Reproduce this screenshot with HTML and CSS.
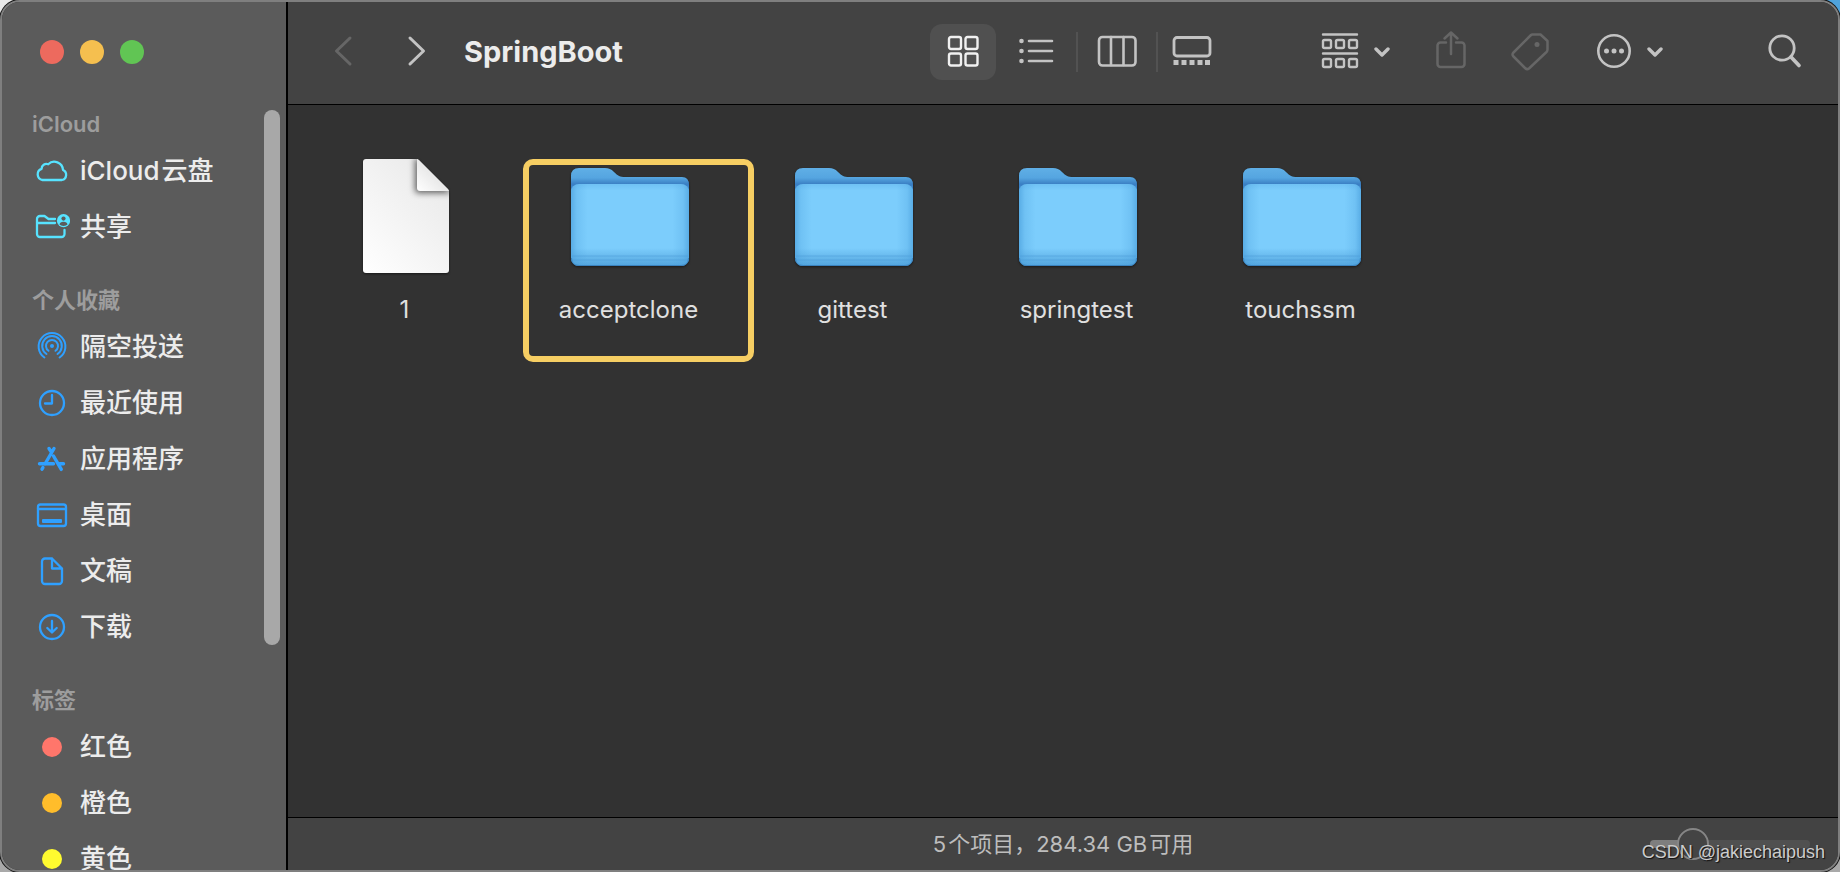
FILE: index.html
```html
<!DOCTYPE html>
<html lang="zh-CN">
<head>
<meta charset="utf-8">
<title>SpringBoot</title>
<link rel="stylesheet" href="styles.css">
</head>
<body>
<svg class="defs" aria-hidden="true">
  <defs>
    <linearGradient id="folder-back" x1="0" y1="0" x2="0" y2="1">
      <stop offset="0" stop-color="#60afe6"/>
      <stop offset="0.38" stop-color="#55a5e0"/>
      <stop offset="0.62" stop-color="#3a7fc4"/>
      <stop offset="1" stop-color="#4490d2"/>
    </linearGradient>
    <linearGradient id="folder-front" x1="0" y1="0" x2="0" y2="1">
      <stop offset="0" stop-color="#6fc1f4"/>
      <stop offset="0.08" stop-color="#7ccdfc"/>
      <stop offset="0.78" stop-color="#7ccdfc"/>
      <stop offset="0.87" stop-color="#6bbcef"/>
      <stop offset="1" stop-color="#52a5de"/>
    </linearGradient>
    <linearGradient id="folder-sides" x1="0" y1="0" x2="1" y2="0">
      <stop offset="0" stop-color="#4a9fdc" stop-opacity="0.7"/>
      <stop offset="0.05" stop-color="#4a9fdc" stop-opacity="0.25"/>
      <stop offset="0.14" stop-color="#4a9fdc" stop-opacity="0"/>
      <stop offset="0.86" stop-color="#4a9fdc" stop-opacity="0"/>
      <stop offset="0.95" stop-color="#4a9fdc" stop-opacity="0.25"/>
      <stop offset="1" stop-color="#4a9fdc" stop-opacity="0.7"/>
    </linearGradient>
    <linearGradient id="paper" x1="0" y1="1" x2="0.8" y2="0">
      <stop offset="0" stop-color="#ffffff"/>
      <stop offset="1" stop-color="#e9e9e9"/>
    </linearGradient>
    <linearGradient id="paper-fold" x1="0" y1="1" x2="0.6" y2="0.4">
      <stop offset="0" stop-color="#ffffff"/>
      <stop offset="1" stop-color="#e4e4e4"/>
    </linearGradient>
    <clipPath id="paper-clip">
      <path d="M24 7H74Q76 7 77 8L106 37Q107 38 107 40V118Q107 121 104 121H24Q21 121 21 118V10Q21 7 24 7Z"/>
    </clipPath>
    <filter id="soft" x="-50%" y="-50%" width="200%" height="200%"><feGaussianBlur stdDeviation="3"/></filter>
    <symbol id="folder" viewBox="0 0 128 128">
      <path d="M5 42V24Q5 16 13 16H39C43 16 45 17 48 20C52 24 54 25 59 25H116Q123 25 123 33V42Z" fill="url(#folder-back)"/>
      <path d="M5 42V100H123V42Z" fill="#4a98d8"/>
      <rect x="5" y="32" width="118" height="82" rx="8" fill="url(#folder-front)"/>
      <rect x="5" y="32" width="118" height="82" rx="8" fill="url(#folder-sides)"/>
      <path d="M6 104H122M6 108H122" stroke="#4c9dd8" stroke-opacity="0.6"/>
      <path d="M5.500 106Q5.500 113.500 13 113.500H115Q122.500 113.500 122.500 106" fill="none" stroke="#3b83bf"/>
    </symbol>
    <symbol id="chevron-down" viewBox="0 0 16 40">
      <path d="M2 17L8 23L14 17" fill="none" stroke="currentColor" stroke-width="3.400" stroke-linecap="round" stroke-linejoin="round"/>
    </symbol>
  </defs>
</svg>

<div class="window">
  <aside class="sidebar">
    <div class="traffic">
      <button class="light light-close" aria-label="关闭"></button>
      <button class="light light-minimize" aria-label="最小化"></button>
      <button class="light light-zoom" aria-label="缩放"></button>
    </div>
    <nav class="places">
      <section class="group">
        <h2 class="group-title">iCloud</h2>
        <a class="place cyan" href="#">
          <svg class="place-icon" viewBox="0 0 36 36" stroke-width="2.300"><path d="M8.500 27A5.800 5.800 0 0 1 7.600 15.800A4.800 4.800 0 0 1 14.200 11.300A8.700 8.700 0 0 1 29 17A5.300 5.300 0 0 1 28 27Z"/></svg>
          <span><span class="latin">iCloud</span>云盘</span>
        </a>
        <a class="place cyan" href="#">
          <svg class="place-icon" viewBox="0 0 36 36" stroke-width="2.300"><path d="M21 10H14.500L10.500 7H6A3 3 0 0 0 3 10V25A3 3 0 0 0 6 28H27.500A3 3 0 0 0 30.500 25V21M3 14H21"/><circle class="solid" cx="29.500" cy="11.700" r="6.600"/><circle class="cutout" cx="29.500" cy="9.600" r="2.100"/><path class="cutout" d="M25.500 15.600Q26 12.800 29.500 12.800T33.500 15.600Q32 17 29.500 17T25.500 15.600Z"/></svg>
          <span>共享</span>
        </a>
      </section>
      <section class="group">
        <h2 class="group-title">个人收藏</h2>
        <a class="place" href="#">
          <svg class="place-icon" viewBox="0 0 36 36" stroke-width="2"><path d="M10.400 28.500A13.400 13.400 0 1 1 25.600 28.500M12.500 25A9.800 9.800 0 1 1 23.500 25M14.500 21.800A6 6 0 1 1 21.500 21.800"/><circle class="solid" cx="18" cy="17" r="2"/></svg>
          <span>隔空投送</span>
        </a>
        <a class="place" href="#">
          <svg class="place-icon" viewBox="0 0 36 36" stroke-width="2.300"><circle cx="18" cy="18" r="12"/><path d="M18 10V18.500H11"/></svg>
          <span>最近使用</span>
        </a>
        <a class="place" href="#">
          <svg class="place-icon" viewBox="0 0 36 36" stroke-width="3.400"><path d="M20 7.500L11 23M8.900 26.600L8 28.200M5.500 22.700H19.500M25.500 22.700H29.500M15 7.500L17 10.500M19.500 15L27.300 28.400"/></svg>
          <span>应用程序</span>
        </a>
        <a class="place" href="#">
          <svg class="place-icon" viewBox="0 0 36 36" stroke-width="2.300"><rect x="4" y="7.500" width="28" height="21.500" rx="2.500"/><path d="M4 12H32"/><rect class="solid" x="8" y="22" width="20" height="4" rx="1"/></svg>
          <span>桌面</span>
        </a>
        <a class="place" href="#">
          <svg class="place-icon" viewBox="0 0 36 36" stroke-width="2.300"><path d="M11 5.500H18L28 15.500V28A3 3 0 0 1 25 31H11A3 3 0 0 1 8 28V8.500A3 3 0 0 1 11 5.500ZM18 5.500V15.500H28"/></svg>
          <span>文稿</span>
        </a>
        <a class="place" href="#">
          <svg class="place-icon" viewBox="0 0 36 36" stroke-width="2.300"><circle cx="18" cy="18" r="12"/><path d="M18 12V23.500M13.300 19L18 23.500L22.700 19"/></svg>
          <span>下载</span>
        </a>
      </section>
      <section class="group">
        <h2 class="group-title">标签</h2>
        <a class="place" href="#"><span class="tag tag-red"></span><span>红色</span></a>
        <a class="place" href="#"><span class="tag tag-orange"></span><span>橙色</span></a>
        <a class="place" href="#"><span class="tag tag-yellow"></span><span>黄色</span></a>
      </section>
    </nav>
    <div class="scroll-thumb"></div>
  </aside>

  <main class="main">
    <header class="toolbar">
      <div class="history">
        <button class="tool dim" aria-label="后退"><svg width="16" height="40" viewBox="0 0 16 40" stroke-width="3"><path d="M15 6L1.500 19L15 32"/></svg></button>
        <button class="tool" aria-label="前进"><svg width="16" height="40" viewBox="0 0 16 40" stroke-width="3"><path d="M1 6L14.500 19L1 32"/></svg></button>
      </div>
      <h1 class="title">SpringBoot</h1>
      <div class="views">
        <button class="tool view view-active" aria-label="图标"><svg width="32" height="40" viewBox="0 0 32 40" stroke-width="2.400"><rect x="2" y="5" width="12" height="12" rx="2"/><rect x="18.500" y="5" width="12" height="12" rx="2"/><rect x="2" y="21.500" width="12" height="12" rx="2"/><rect x="18.500" y="21.500" width="12" height="12" rx="2"/></svg></button>
        <button class="tool view view-list" aria-label="列表"><svg width="34" height="40" viewBox="0 0 34 40" stroke-width="2.600"><path d="M10 9H33M10 19H33M10 29H33"/><g class="solid"><circle cx="2.500" cy="9" r="2.300"/><circle cx="2.500" cy="19" r="2.300"/><circle cx="2.500" cy="29" r="2.300"/></g></svg></button>
        <button class="tool view view-columns" aria-label="分栏"><svg width="40" height="40" viewBox="0 0 40 40" stroke-width="2.600"><rect x="2" y="5" width="36.500" height="28.500" rx="3.500"/><path d="M14 5V33M26.500 5V33"/></svg></button>
        <button class="tool view view-gallery" aria-label="画廊"><svg width="40" height="40" viewBox="0 0 40 40" stroke-width="2.800"><rect x="2" y="5.500" width="36" height="18.500" rx="3"/><g class="solid"><rect x="1.500" y="28" width="5" height="5"/><rect x="9.500" y="28" width="5" height="5"/><rect x="17.500" y="28" width="5" height="5"/><rect x="25.500" y="28" width="5" height="5"/><rect x="33" y="28" width="5" height="5"/></g></svg></button>
      </div>
      <button class="tool" aria-label="分组"><svg width="36" height="40" viewBox="0 0 36 40" stroke-width="2.400"><path d="M1 2.500H35M1 21.500H35"/><rect x="1" y="8" width="8" height="8" rx="1.500"/><rect x="14" y="8" width="8" height="8" rx="1.500"/><rect x="27" y="8" width="8" height="8" rx="1.500"/><rect x="1" y="27" width="8" height="8" rx="1.500"/><rect x="14" y="27" width="8" height="8" rx="1.500"/><rect x="27" y="27" width="8" height="8" rx="1.500"/></svg><svg width="16" height="40"><use href="#chevron-down"/></svg></button>
      <button class="tool dim tool-share" aria-label="共享"><svg width="30" height="40" viewBox="0 0 30 40" stroke-width="2.500"><path d="M10 10.500H4.500A3 3 0 0 0 1.500 13.500V32A3 3 0 0 0 4.500 35H25.500A3 3 0 0 0 28.500 32V13.500A3 3 0 0 0 25.500 10.500H20M15 22V1M8.500 6.500L15 0.500L21.500 6.500"/></svg></button>
      <button class="tool dim tool-tag" aria-label="标签"><svg width="38" height="40" viewBox="0 0 38 40" stroke-width="2.500"><path d="M21.500 2.500H29.500L36.500 9V17.500Q36.500 19 35.500 20L18 36.500Q16 38 14 36L2.500 24.500Q0.500 22.500 2.500 20.500L19.500 3.500Q20.500 2.500 21.500 2.500Z"/><circle class="solid" cx="26" cy="12.500" r="2.500"/></svg></button>
      <button class="tool tool-more" aria-label="操作"><svg width="34" height="40" viewBox="0 0 34 40" stroke-width="2.600"><circle cx="17" cy="19" r="15.700"/><g class="solid"><circle cx="9.500" cy="19" r="2.500"/><circle cx="17" cy="19" r="2.500"/><circle cx="24.500" cy="19" r="2.500"/></g></svg><svg width="16" height="40"><use href="#chevron-down"/></svg></button>
      <button class="tool tool-search" aria-label="搜索"><svg width="34" height="40" viewBox="0 0 34 40" stroke-width="2.800"><circle cx="14" cy="16" r="12.200"/><path d="M23 25L31 33.500" stroke-width="3.700"/></svg></button>
    </header>

    <div class="files">
      <a class="file" href="#">
        <svg class="file-icon" viewBox="0 0 128 128">
          <g clip-path="url(#paper-clip)">
            <rect x="21" y="7" width="86" height="114" fill="url(#paper)"/>
            <path d="M73 7V38Q73 41 76 41H110L75 5Z" fill="#000000" fill-opacity="0.6" filter="url(#soft)"/>
            <path d="M75 6V36Q75 39 78 39H108Z" fill="url(#paper-fold)"/>
          </g>
        </svg>
        <span class="file-name">1</span>
      </a>
      <a class="file" href="#"><svg class="file-icon"><use href="#folder"/></svg><span class="file-name">acceptclone</span><span class="marker"></span></a>
      <a class="file" href="#"><svg class="file-icon"><use href="#folder"/></svg><span class="file-name">gittest</span></a>
      <a class="file" href="#"><svg class="file-icon"><use href="#folder"/></svg><span class="file-name">springtest</span></a>
      <a class="file" href="#"><svg class="file-icon"><use href="#folder"/></svg><span class="file-name">touchssm</span></a>
    </div>

    <footer class="status">
      <p class="status-text"><span class="latin">5</span>个项目，<span class="latin">284.34 GB</span>可用</p>
      <input class="size-slider" type="range" min="0" max="100" value="21" aria-label="图标大小">
    </footer>
  </main>
</div>
<div class="watermark">CSDN @jakiechaipush</div>
</body>
</html>
```
FILE: styles.css
```css
* {
  box-sizing: border-box;
}

body {
  margin: 0;
  height: 100vh;
  overflow: hidden;
  position: relative;
  font-family: Inter, "Noto Sans CJK SC", sans-serif;
  color: #ececec;
  background: conic-gradient(#4fa3dc 0 25%, #a9a9a9 0 75%, #e8e8e8 0);
}

button {
  margin: 0;
  padding: 0;
  border: 0;
  background: none;
  color: inherit;
  font: inherit;
}

a {
  color: inherit;
  text-decoration: none;
}

.defs {
  position: absolute;
  width: 0;
  height: 0;
}

.window {
  display: flex;
  height: 100%;
  border: 2px solid #7f7f7f;
  border-radius: 20px;
  overflow: hidden;
  background: #323232;
  box-shadow: 0 0 0 1px #111111;
}

/* Sidebar */

.sidebar {
  position: relative;
  display: flex;
  flex-direction: column;
  flex: none;
  width: 286px;
  overflow: hidden;
  background: #5b5b5b;
  border-right: 2px solid #000000;
}

.traffic {
  display: flex;
  flex: none;
  gap: 16px;
  height: 103px;
  padding: 38px 38px 0;
}

.light {
  width: 24px;
  height: 24px;
  border-radius: 50%;
}

.light-close {
  background: #ed6a5e;
}

.light-minimize {
  background: #f5bf4f;
}

.light-zoom {
  background: #61c554;
}

.places {
  display: flex;
  flex-direction: column;
  gap: 26px;
}

.group-title {
  margin: 0;
  padding-left: 30px;
  font-size: 22px;
  line-height: 38px;
  font-weight: 600;
  color: #9d9d9d;
}

.place {
  display: flex;
  align-items: center;
  gap: 10px;
  height: 56px;
  padding-left: 32px;
  font-size: 26px;
  line-height: 36px;
  font-weight: 500;
}

.place-icon {
  flex: none;
  width: 36px;
  height: 36px;
  fill: none;
  stroke: #2fa0ff;
  stroke-linecap: round;
  stroke-linejoin: round;
}

.place-icon .solid {
  fill: #2fa0ff;
  stroke: none;
}

.cyan .place-icon {
  stroke: #57e3ff;
}

.cyan .place-icon .solid {
  fill: #57e3ff;
}

.place-icon .cutout {
  fill: #5b5b5b;
  stroke: none;
}

.latin {
  margin-right: 2px;
}

.tag {
  width: 20px;
  height: 20px;
  margin: 0 8px;
  border-radius: 50%;
}

.tag-red {
  background: #ff766b;
}

.tag-orange {
  background: #ffbd2b;
}

.tag-yellow {
  background: #fffb2f;
}

.scroll-thumb {
  position: absolute;
  top: 108px;
  right: 6px;
  width: 16px;
  height: 535px;
  border-radius: 8px;
  background: #a8a8a8;
}

/* Main column */

.main {
  display: flex;
  flex-direction: column;
  flex: 1;
  min-width: 0;
}

.toolbar {
  display: flex;
  align-items: center;
  flex: none;
  height: 103px;
  padding: 0 36px 2px 47px;
  background: #434343;
  border-bottom: 1px solid #000000;
}

.tool {
  display: flex;
  align-items: center;
  justify-content: center;
  gap: 16px;
  flex: none;
  color: #c3c3c3;
}

.tool svg {
  display: block;
  overflow: visible;
  fill: none;
  stroke: currentColor;
  stroke-linecap: round;
  stroke-linejoin: round;
}

.tool .solid {
  fill: currentColor;
  stroke: none;
}

.dim {
  color: #666666;
}

.history {
  display: flex;
  gap: 58px;
}

.title {
  flex: 1;
  margin: 0 0 0 39px;
  font-size: 29px;
  line-height: 40px;
  font-weight: 700;
}

.views {
  display: flex;
  align-items: center;
  margin-right: 96px;
}

.view {
  height: 40px;
}

.view-active {
  width: 66px;
  height: 56px;
  border-radius: 12px;
  background: #505050;
  color: #f0f0f0;
}

.view-list {
  width: 80px;
}

.view-columns {
  width: 82px;
  border-left: 2px solid #525252;
  border-right: 2px solid #525252;
}

.view-gallery {
  width: 68px;
}

.tool-share {
  margin-left: 46px;
}

.tool-tag {
  margin-left: 45px;
}

.tool-more {
  margin-left: 48px;
}

.tool-search {
  margin-left: 105px;
}

.files {
  display: flex;
  flex-wrap: wrap;
  align-content: flex-start;
  flex: 1;
  padding: 47px 6px;
  background: #323232;
}

.file {
  position: relative;
  display: flex;
  flex-direction: column;
  align-items: center;
  gap: 15px;
  width: 224px;
}

.file-icon {
  width: 128px;
  height: 128px;
  filter: drop-shadow(0 1px 1px rgba(0, 0, 0, 0.5));
}

.file-name {
  padding-right: 3px;
  font-size: 24px;
  line-height: 30px;
  color: #e0e0e0;
}

.marker {
  position: absolute;
  top: 7px;
  left: 5px;
  width: 231px;
  height: 203px;
  border: 6px solid #f6ce63;
  border-radius: 10px;
}

.status {
  display: grid;
  grid-template-columns: 1fr auto 1fr;
  align-items: center;
  flex: none;
  height: 53px;
  padding: 0 28px;
  background: #434343;
  border-top: 1px solid #000000;
}

.status-text {
  grid-column: 2;
  margin: 0;
  font-size: 22px;
  line-height: 32px;
  color: #bdbdbd;
}

.size-slider {
  justify-self: end;
  appearance: none;
  width: 160px;
  height: 32px;
  margin: 0;
  background: none;
}

.size-slider::-webkit-slider-runnable-track {
  height: 8px;
  border-radius: 4px;
  background: linear-gradient(to right, #7e7e7e 43px, #505050 43px);
}

.size-slider::-webkit-slider-thumb {
  appearance: none;
  width: 32px;
  height: 32px;
  margin-top: -12px;
  border: 2px solid #868686;
  border-radius: 50%;
  background: #444444;
}

.watermark {
  position: absolute;
  right: 15px;
  bottom: 8px;
  font-family: "Liberation Sans", Arial, sans-serif;
  font-size: 18px;
  line-height: 24px;
  color: #cccccc;
  text-shadow: 1px 1px 1px #111111;
}
```
